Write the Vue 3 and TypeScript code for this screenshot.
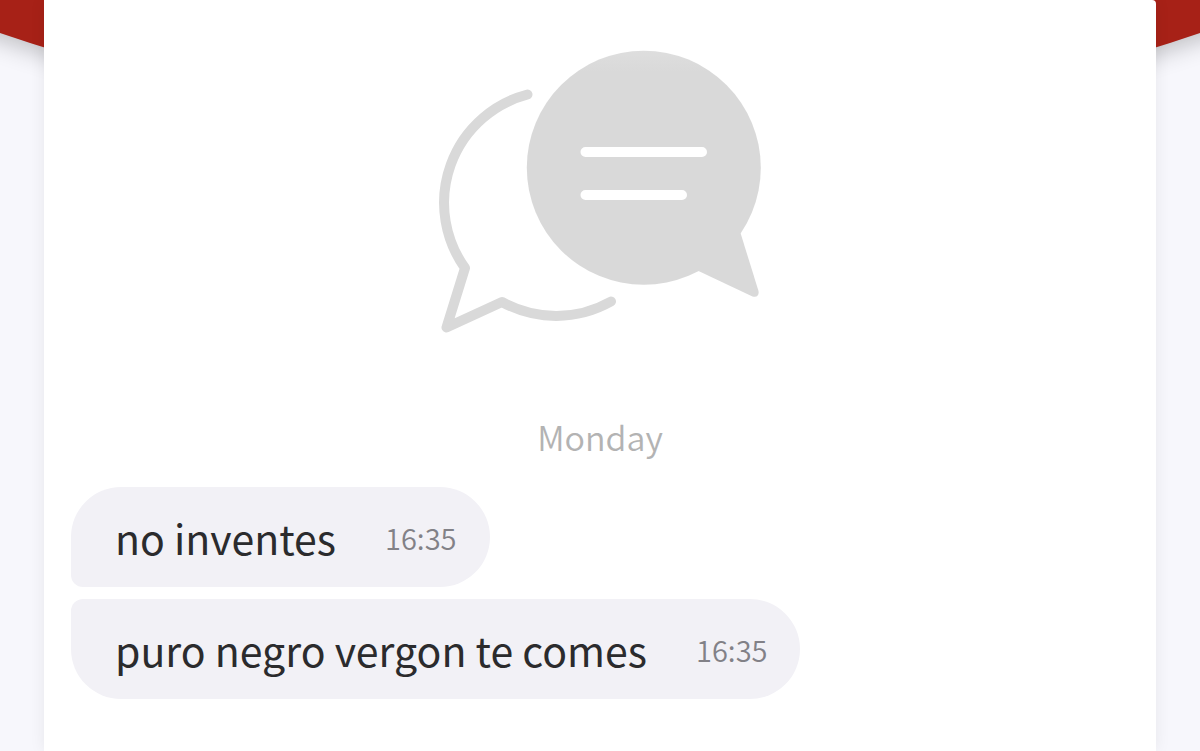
<script setup lang="ts">
interface Message {
  id: number
  text: string
  time: string
}

const day = 'Monday'
const messages: Message[] = [
  { id: 1, text: 'no inventes', time: '16:35' },
  { id: 2, text: 'puro negro vergon te comes', time: '16:35' },
]
</script>

<template>
  <div class="page">
    <div class="backdrop" aria-hidden="true"></div>
    <main class="card">
      <svg class="emblem" viewBox="0 0 330 290" aria-hidden="true">
        <defs>
          <linearGradient id="bubble-fade" gradientUnits="userSpaceOnUse" x1="0" y1="4" x2="0" y2="26">
            <stop offset="0" stop-color="#dedede" />
            <stop offset="1" stop-color="#d9d9d9" />
          </linearGradient>
        </defs>
        <path
          class="outline"
          d="M92.500 48.500 A112 112 0 0 0 30 222 L11.500 281.500 L67 256 A112 112 0 0 0 176 255.500"
        />
        <circle cx="208.800" cy="121.700" r="117" fill="url(#bubble-fade)" />
        <path class="solid" d="M305.500 187 L323.500 245 Q324.500 252 317.500 250.500 L263.500 225 Z" />
        <path class="line" d="M150.500 106 H267 M150.500 149 H247" />
      </svg>
      <h2 class="day">{{ day }}</h2>
      <ul class="messages">
        <li v-for="message in messages" :key="message.id" class="message">
          <span class="text">{{ message.text }}</span>
          <time class="time">{{ message.time }}</time>
        </li>
      </ul>
    </main>
  </div>
</template>

<style>
body {
  margin: 0;
  background: #f7f7fc;
}
</style>

<style scoped>
.page {
  position: relative;
  box-sizing: border-box;
  min-height: 100vh;
  padding: 0 44px;
  display: flex;
  overflow: hidden;
  background: #f7f7fc;
  font-family: "Noto Sans CJK SC", "Noto Sans", sans-serif;
}

.backdrop {
  position: absolute;
  left: 50%;
  bottom: calc(100% - 133px);
  width: 3700px;
  height: 3700px;
  margin-left: -1850px;
  border-radius: 50%;
  background: #a72117;
  box-shadow: 0 6px 24px rgba(0, 0, 0, 0.24);
}

.card {
  position: relative;
  flex: 1;
  min-width: 0;
  box-sizing: border-box;
  padding: 46px 27px 52px;
  display: flex;
  flex-direction: column;
  align-items: center;
  border-radius: 0 4px 0 0;
  background: #fff;
  box-shadow: 0 0 16px rgba(0, 0, 0, 0.07);
}

.emblem {
  display: block;
  width: 330px;
  height: 290px;
}

.outline {
  fill: none;
  stroke: #d9d9d9;
  stroke-width: 10;
  stroke-linecap: round;
  stroke-linejoin: round;
}

.solid {
  fill: #d9d9d9;
}

.line {
  fill: none;
  stroke: #fff;
  stroke-width: 10;
  stroke-linecap: round;
}

.day {
  margin: 76px 0 0;
  font-size: 34px;
  line-height: 50px;
  font-weight: 350;
  color: #b3b3b3;
}

.messages {
  align-self: stretch;
  margin: 25px 0 0;
  padding: 0;
  display: flex;
  flex-direction: column;
  align-items: flex-start;
  gap: 12px;
  list-style: none;
}

.message {
  box-sizing: border-box;
  min-height: 100px;
  padding: 20px 33px 20px 44px;
  display: flex;
  align-items: center;
  gap: 49px;
  border-radius: 50px;
  background: #f2f1f6;
}

.message:first-child {
  border-bottom-left-radius: 12px;
}

.message:last-child {
  border-top-left-radius: 12px;
}

.text {
  font-size: 41px;
  line-height: 60px;
  font-weight: 400;
  color: #2b2b2d;
}

.time {
  font-size: 29px;
  line-height: 60px;
  font-weight: 350;
  color: #828187;
}
</style>
